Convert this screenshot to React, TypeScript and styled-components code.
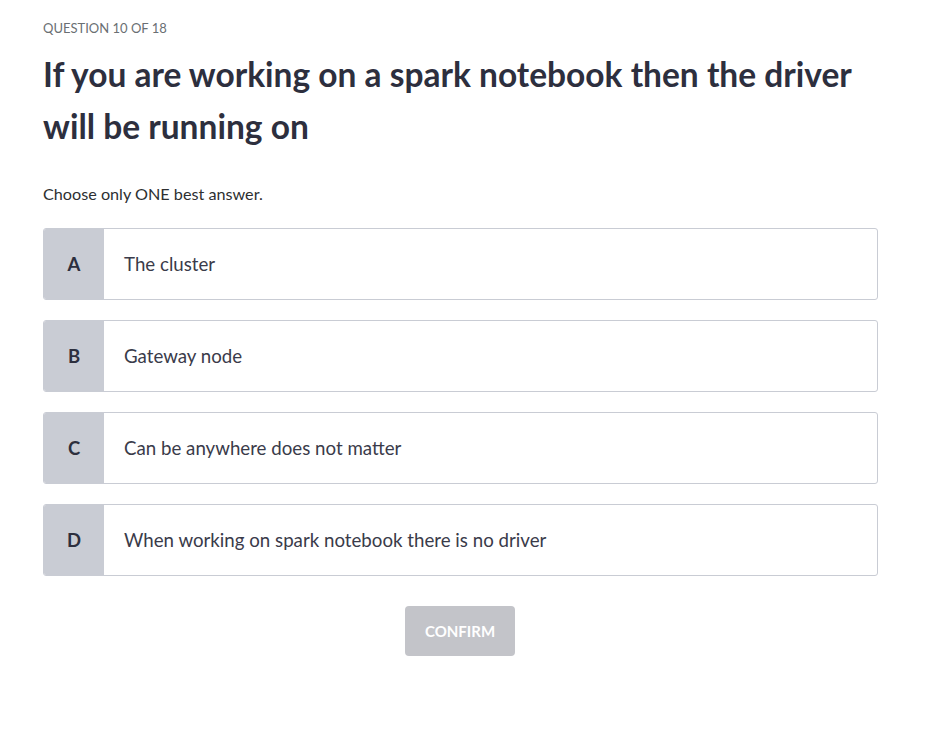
import styled, { createGlobalStyle } from 'styled-components'

const GlobalStyle = createGlobalStyle`
  body {
    margin: 0;
    background: #fff;
    font-family: Lato, "Liberation Sans", sans-serif;
    color: #2d2f31;
  }
`

const answers = [
  { key: 'A', text: 'The cluster' },
  { key: 'B', text: 'Gateway node' },
  { key: 'C', text: 'Can be anywhere does not matter' },
  { key: 'D', text: 'When working on spark notebook there is no driver' },
]

export default function App() {
  return (
    <Page>
      <GlobalStyle />
      <Counter>Question 10 of 18</Counter>
      <Heading>If you are working on a spark notebook then the driver will be running on</Heading>
      <Hint>Choose only ONE best answer.</Hint>
      <Options>
        {answers.map(a => (
          <Option key={a.key}>
            <Letter>{a.key}</Letter>
            <Label>{a.text}</Label>
          </Option>
        ))}
      </Options>
      <Actions>
        <ConfirmButton disabled>Confirm</ConfirmButton>
      </Actions>
    </Page>
  )
}

const Page = styled.div`
  width: 835px;
  padding: 20px 0 0 43px;
`
const Counter = styled.div`
  font-size: 13px;
  line-height: 16px;
  text-transform: uppercase;
  color: #6a6f73;
`
const Heading = styled.h1`
  margin: 12px 0 0;
  max-width: 830px;
  font-size: 33.5px;
  line-height: 52px;
  font-weight: 700;
  color: #2d2f3e;
`
const Hint = styled.p`
  margin: 32px 0 0;
  font-size: 16.2px;
  line-height: 20px;
  color: #2d2f31;
`
const Options = styled.div`
  margin-top: 24px;
  display: flex;
  flex-direction: column;
  gap: 20px;
`
const Option = styled.div`
  display: flex;
  height: 72px;
  box-sizing: border-box;
  border: 1px solid #c9ccd4;
  border-radius: 3px;
  overflow: hidden;
  background: #fff;
  cursor: pointer;
`
const Letter = styled.div`
  width: 60px;
  flex: none;
  display: flex;
  align-items: center;
  justify-content: center;
  background: #c9ccd4;
  font-size: 18.5px;
  font-weight: 700;
  color: #2d2f3e;
`
const Label = styled.div`
  display: flex;
  align-items: center;
  padding-left: 20px;
  font-size: 18.7px;
  color: #3a3b4a;
`
const Actions = styled.div`
  display: flex;
  justify-content: center;
  margin-top: 30px;
`
const ConfirmButton = styled.button`
  width: 110px;
  height: 50px;
  margin-right: 1px;
  border: none;
  border-radius: 4px;
  background: #c3c4c9;
  color: #fff;
  font-family: inherit;
  font-size: 15px;
  font-weight: 700;
  text-transform: uppercase;
`
